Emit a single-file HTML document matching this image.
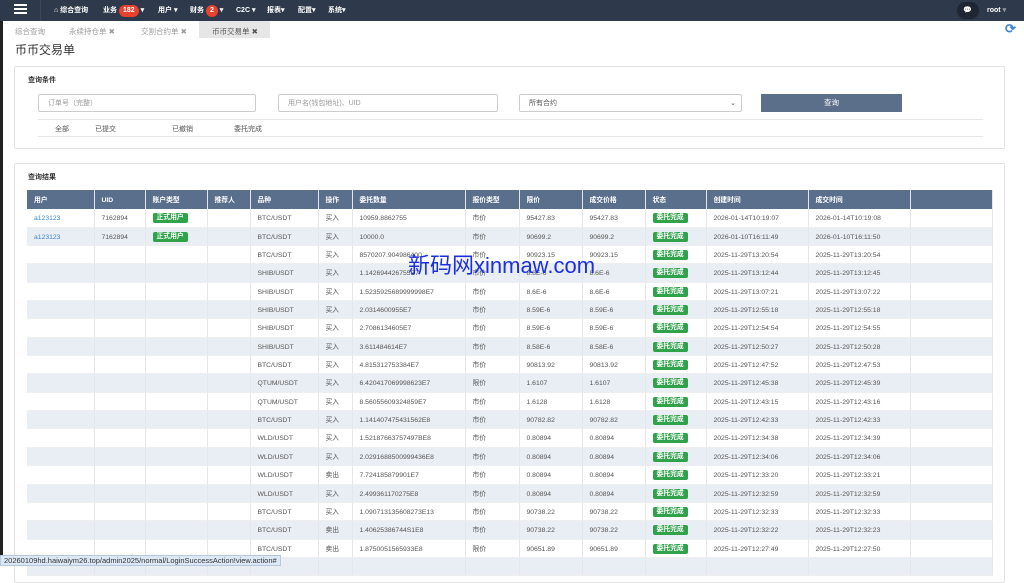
<!DOCTYPE html>
<html><head><meta charset="utf-8"><style>
*{margin:0;padding:0;box-sizing:border-box}
body{width:1024px;height:566px;overflow:hidden;background:#fff;font-family:"Liberation Sans","Noto Sans CJK SC",sans-serif;font-size:7px;color:#555;position:relative}
.nav{position:absolute;left:0;top:0;width:1024px;height:21px;background:#2e3a4c;color:#fff;font-weight:bold;font-size:7px}
.nav span{position:absolute;top:0;line-height:21px}
.badge{background:#e8412c;border-radius:6px;padding:1px 4px;color:#fff;display:inline-block;line-height:10px}
.tabs{position:absolute;top:21px;left:0;height:17px;width:1024px}
.tabs span{position:absolute;top:5px;color:#999;font-size:7.5px}
.panel{position:absolute;left:14px;width:991px;border:1px solid #e2e2e2;border-radius:2px;background:#fff}
.inp{position:absolute;top:27px;height:18px;border:1px solid #ccc;border-radius:2px;color:#999;padding:2px 9px 0;line-height:14px;font-size:7px}
table{position:absolute;left:27px;top:190px;border-collapse:collapse;table-layout:fixed;width:965px}
td,th{line-height:11.35px;padding:4px 0 2px 7px;vertical-align:middle;border-right:1px solid #e3e6ea;text-align:left;white-space:nowrap;overflow:hidden;font-size:6.8px}
th{background:#5a6f8c;color:#fff;padding:5px 0 3px 7px;font-weight:bold}
tr:nth-child(odd) td{background:#e9eef4}
tr td{border-bottom:1px solid #eee}
.g{background:#2fa24a;color:#fff;border-radius:2px;padding:0 4px;font-weight:bold;display:inline-block;line-height:10px;vertical-align:top;margin-top:0}
a{color:#3b84d4;text-decoration:none}
</style></head><body>
<div style="position:absolute;left:0;top:0;width:3px;height:566px;background:#222"></div>
<div class="nav">
<div style="position:absolute;left:14px;top:4px;width:13px;height:2px;background:#fff;box-shadow:0 4px #fff,0 8px #fff"></div>
<div style="position:absolute;left:40px;top:0;width:1px;height:21px;background:#3b475a"></div>
<span style="left:54px">⌂ 综合查询</span>
<span style="left:103px">业务 <b class="badge">182</b> ▾</span>
<span style="left:158px">用户 ▾</span>
<span style="left:190px">财务 <b class="badge">2</b> ▾</span>
<span style="left:236px">C2C ▾</span>
<span style="left:267px">报表▾</span>
<span style="left:298px">配置▾</span>
<span style="left:328px">系统▾</span>
<div style="position:absolute;left:957px;top:2px;width:22px;height:17px;border-radius:8px;background:#1f2735"></div>
<span style="left:963px">💬</span>
<span style="left:987px">root <span style="position:static;color:#999">▾</span></span>
</div>
<div class="tabs">
<div style="position:absolute;left:199px;top:0;width:71px;height:17px;background:#e6e6e6"></div>
<span style="left:15px">综合查询</span>
<span style="left:69px">永续持仓单 ✖</span>
<span style="left:141px">交割合约单 ✖</span>
<span style="left:212px;color:#555">币币交易单 ✖</span>
<span style="left:1005px;top:0;color:#3b84d4;font-size:13px;font-weight:bold">⟳</span>
</div>
<div style="position:absolute;left:15px;top:41px;font-size:12px;color:#333">币币交易单</div>
<div class="panel" style="top:66px;height:83px">
<div style="position:absolute;left:13px;top:8px;font-weight:bold;color:#333">查询条件</div>
<div class="inp" style="left:23px;width:218px">订单号（完整）</div>
<div class="inp" style="left:263px;width:220px">用户名(钱包地址)、UID</div>
<div class="inp" style="left:504px;width:223px;color:#555">所有合约<span style="position:absolute;right:5px">⌄</span></div>
<div style="position:absolute;left:746px;top:27px;width:141px;height:18px;background:#5b6f8b;color:#fff;text-align:center;line-height:18px;font-size:7.5px">查询</div>
<div style="position:absolute;left:23px;top:52px;width:945px;height:18px;border-top:1px solid #e5e5e5;border-bottom:1px solid #e5e5e5"></div>
<span style="position:absolute;left:40px;top:57px">全部</span>
<span style="position:absolute;left:80px;top:57px">已提交</span>
<span style="position:absolute;left:157px;top:57px">已撤销</span>
<span style="position:absolute;left:219px;top:57px">委托完成</span>
</div>
<div class="panel" style="top:163px;height:420px">
<div style="position:absolute;left:13px;top:8px;font-weight:bold;color:#333">查询结果</div>
</div>
<table>
<colgroup><col style="width:67px"><col style="width:51px"><col style="width:62px"><col style="width:43px"><col style="width:68px"><col style="width:34px"><col style="width:113px"><col style="width:54px"><col style="width:63px"><col style="width:63px"><col style="width:61px"><col style="width:102px"><col style="width:102px"><col style="width:82px"></colgroup>
<tr><th>用户</th><th>UID</th><th>账户类型</th><th>推荐人</th><th>品种</th><th>操作</th><th>委托数量</th><th>报价类型</th><th>限价</th><th>成交价格</th><th>状态</th><th>创建时间</th><th>成交时间</th><th></th></tr>
<tr><td><a>a123123</a></td><td>7162894</td><td><span class="g">正式用户</span></td><td></td><td>BTC/USDT</td><td>买入</td><td>10959.8862755</td><td>市价</td><td>95427.83</td><td>95427.83</td><td><span class="g">委托完成</span></td><td>2026-01-14T10:19:07</td><td>2026-01-14T10:19:08</td><td></td></tr>
<tr><td><a>a123123</a></td><td>7162894</td><td><span class="g">正式用户</span></td><td></td><td>BTC/USDT</td><td>买入</td><td>10000.0</td><td>市价</td><td>90699.2</td><td>90699.2</td><td><span class="g">委托完成</span></td><td>2026-01-10T16:11:49</td><td>2026-01-10T16:11:50</td><td></td></tr>
<tr><td></td><td></td><td></td><td></td><td>BTC/USDT</td><td>买入</td><td>8570207.904986400</td><td>市价</td><td>90923.15</td><td>90923.15</td><td><span class="g">委托完成</span></td><td>2025-11-29T13:20:54</td><td>2025-11-29T13:20:54</td><td></td></tr>
<tr><td></td><td></td><td></td><td></td><td>SHIB/USDT</td><td>买入</td><td>1.142694426755E7</td><td>市价</td><td>8.6E-6</td><td>8.6E-6</td><td><span class="g">委托完成</span></td><td>2025-11-29T13:12:44</td><td>2025-11-29T13:12:45</td><td></td></tr>
<tr><td></td><td></td><td></td><td></td><td>SHIB/USDT</td><td>买入</td><td>1.5235925689999998E7</td><td>市价</td><td>8.6E-6</td><td>8.6E-6</td><td><span class="g">委托完成</span></td><td>2025-11-29T13:07:21</td><td>2025-11-29T13:07:22</td><td></td></tr>
<tr><td></td><td></td><td></td><td></td><td>SHIB/USDT</td><td>买入</td><td>2.0314600955E7</td><td>市价</td><td>8.59E-6</td><td>8.59E-6</td><td><span class="g">委托完成</span></td><td>2025-11-29T12:55:18</td><td>2025-11-29T12:55:18</td><td></td></tr>
<tr><td></td><td></td><td></td><td></td><td>SHIB/USDT</td><td>买入</td><td>2.7086134605E7</td><td>市价</td><td>8.59E-6</td><td>8.59E-6</td><td><span class="g">委托完成</span></td><td>2025-11-29T12:54:54</td><td>2025-11-29T12:54:55</td><td></td></tr>
<tr><td></td><td></td><td></td><td></td><td>SHIB/USDT</td><td>买入</td><td>3.611484614E7</td><td>市价</td><td>8.58E-6</td><td>8.58E-6</td><td><span class="g">委托完成</span></td><td>2025-11-29T12:50:27</td><td>2025-11-29T12:50:28</td><td></td></tr>
<tr><td></td><td></td><td></td><td></td><td>BTC/USDT</td><td>买入</td><td>4.815312753384E7</td><td>市价</td><td>90813.92</td><td>90813.92</td><td><span class="g">委托完成</span></td><td>2025-11-29T12:47:52</td><td>2025-11-29T12:47:53</td><td></td></tr>
<tr><td></td><td></td><td></td><td></td><td>QTUM/USDT</td><td>买入</td><td>6.420417069998623E7</td><td>限价</td><td>1.6107</td><td>1.6107</td><td><span class="g">委托完成</span></td><td>2025-11-29T12:45:38</td><td>2025-11-29T12:45:39</td><td></td></tr>
<tr><td></td><td></td><td></td><td></td><td>QTUM/USDT</td><td>买入</td><td>8.56055609324859E7</td><td>市价</td><td>1.6128</td><td>1.6128</td><td><span class="g">委托完成</span></td><td>2025-11-29T12:43:15</td><td>2025-11-29T12:43:16</td><td></td></tr>
<tr><td></td><td></td><td></td><td></td><td>BTC/USDT</td><td>买入</td><td>1.141407475431562E8</td><td>市价</td><td>90782.82</td><td>90782.82</td><td><span class="g">委托完成</span></td><td>2025-11-29T12:42:33</td><td>2025-11-29T12:42:33</td><td></td></tr>
<tr><td></td><td></td><td></td><td></td><td>WLD/USDT</td><td>买入</td><td>1.52187663757497BE8</td><td>市价</td><td>0.80894</td><td>0.80894</td><td><span class="g">委托完成</span></td><td>2025-11-29T12:34:38</td><td>2025-11-29T12:34:39</td><td></td></tr>
<tr><td></td><td></td><td></td><td></td><td>WLD/USDT</td><td>买入</td><td>2.0291688500999436E8</td><td>市价</td><td>0.80894</td><td>0.80894</td><td><span class="g">委托完成</span></td><td>2025-11-29T12:34:06</td><td>2025-11-29T12:34:06</td><td></td></tr>
<tr><td></td><td></td><td></td><td></td><td>WLD/USDT</td><td>卖出</td><td>7.724185879901E7</td><td>市价</td><td>0.80894</td><td>0.80894</td><td><span class="g">委托完成</span></td><td>2025-11-29T12:33:20</td><td>2025-11-29T12:33:21</td><td></td></tr>
<tr><td></td><td></td><td></td><td></td><td>WLD/USDT</td><td>买入</td><td>2.499361170275E8</td><td>市价</td><td>0.80894</td><td>0.80894</td><td><span class="g">委托完成</span></td><td>2025-11-29T12:32:59</td><td>2025-11-29T12:32:59</td><td></td></tr>
<tr><td></td><td></td><td></td><td></td><td>BTC/USDT</td><td>买入</td><td>1.090713135608273E13</td><td>市价</td><td>90738.22</td><td>90738.22</td><td><span class="g">委托完成</span></td><td>2025-11-29T12:32:33</td><td>2025-11-29T12:32:33</td><td></td></tr>
<tr><td></td><td></td><td></td><td></td><td>BTC/USDT</td><td>卖出</td><td>1.40625386744S1E8</td><td>市价</td><td>90738.22</td><td>90738.22</td><td><span class="g">委托完成</span></td><td>2025-11-29T12:32:22</td><td>2025-11-29T12:32:23</td><td></td></tr>
<tr><td></td><td></td><td></td><td></td><td>BTC/USDT</td><td>卖出</td><td>1.8750051565933E8</td><td>限价</td><td>90651.89</td><td>90651.89</td><td><span class="g">委托完成</span></td><td>2025-11-29T12:27:49</td><td>2025-11-29T12:27:50</td><td></td></tr>
<tr><td>&nbsp;</td><td></td><td></td><td></td><td></td><td></td><td></td><td></td><td></td><td></td><td></td><td></td><td></td><td></td></tr>
</table>
<div style="position:absolute;left:408px;top:248px;font-size:22px;color:#1a2fe0">新码网xinmaw.com</div>
<div style="position:absolute;left:0;top:555px;width:281px;height:11px;background:#dce8f6;border:1px solid #b8c8dc;color:#333;font-size:7.5px;padding-left:3px;line-height:10px">20260109hd.haiwaiym26.top/admin2025/normal/LoginSuccessAction!view.action#</div>
</body></html>
